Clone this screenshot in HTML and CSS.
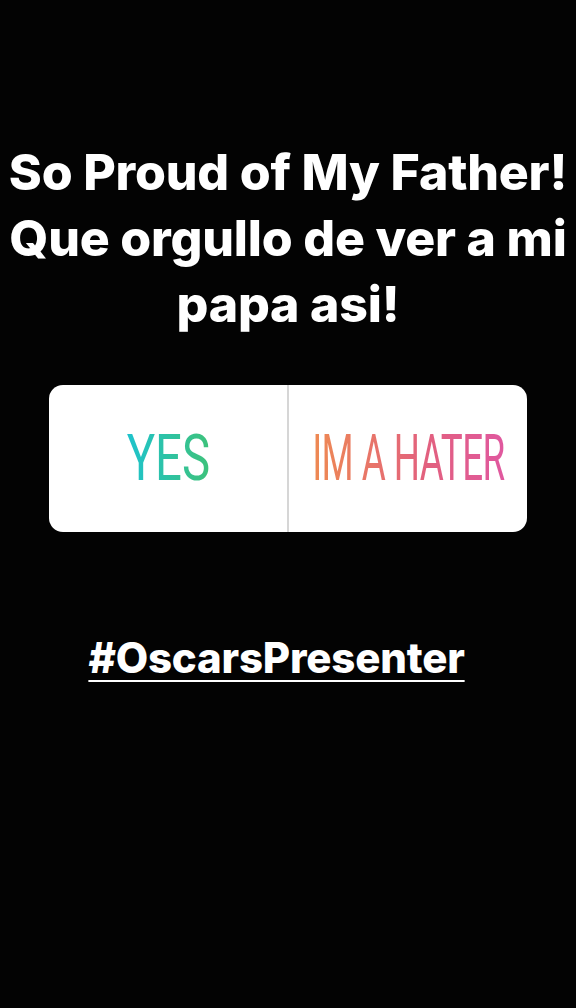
FILE: index.html
```html
<!DOCTYPE html>
<html lang="en">
<head>
  <meta charset="UTF-8">
  <title>Story</title>
  <link rel="stylesheet" href="styles.css">
</head>
<body>

<div class="story">
  <h1 class="caption">So Proud of My Father!<br>Que orgullo de ver a mi<br>papa asi!</h1>

  <!-- Poll -->
  <div class="poll">
    <div class="option"><span class="label yes">YES</span></div>
    <div class="option"><span class="label hater">IM A HATER</span></div>
  </div>

  <div class="tag">#OscarsPresenter</div>
</div>

</body>
</html>
```

FILE: styles.css
```css
html, body {
  margin: 0;
  background: #030303;
}
.story {
  width: 576px;
  height: 1008px;
  display: flex;
  flex-direction: column;
  align-items: center;
  font-family: Inter, "Liberation Sans", sans-serif;
  color: #fff;
}
.caption {
  margin: 139px 0 0;
  font-size: 50px;
  font-weight: 800;
  line-height: 66px;
  text-align: center;
  letter-spacing: -0.2px;
  white-space: nowrap;
}
.poll {
  margin-top: 48px;
  width: 478px;
  height: 147px;
  background: #fff;
  border-radius: 14px;
  display: flex;
}
.option {
  flex: 1 1 0;
  min-width: 0;
  display: flex;
  align-items: center;
  justify-content: center;
}
.option + .option {
  border-left: 2px solid #d6d6d6;
}
.label {
  font-family: Roboto, sans-serif;
  font-size: 64px;
  font-weight: 400;
  display: inline-block;
  flex: none;
  white-space: nowrap;
  -webkit-background-clip: text;
  background-clip: text;
  color: transparent;
}
.yes {
  transform: scaleX(0.74);
  background-image: linear-gradient(90deg, #1ec3cd, #3ec27a);
}
.hater {
  letter-spacing: -1px;
  transform: scaleX(0.575);
  background-image: linear-gradient(90deg, #ee8a52, #e2607f 60%, #e0589f);
}
.tag {
  margin: 100px 23px 0 0;
  font-size: 42px;
  font-weight: 800;
  letter-spacing: -0.2px;
  text-decoration: underline;
  text-decoration-thickness: 2px;
  text-underline-offset: 7px;
}
```
